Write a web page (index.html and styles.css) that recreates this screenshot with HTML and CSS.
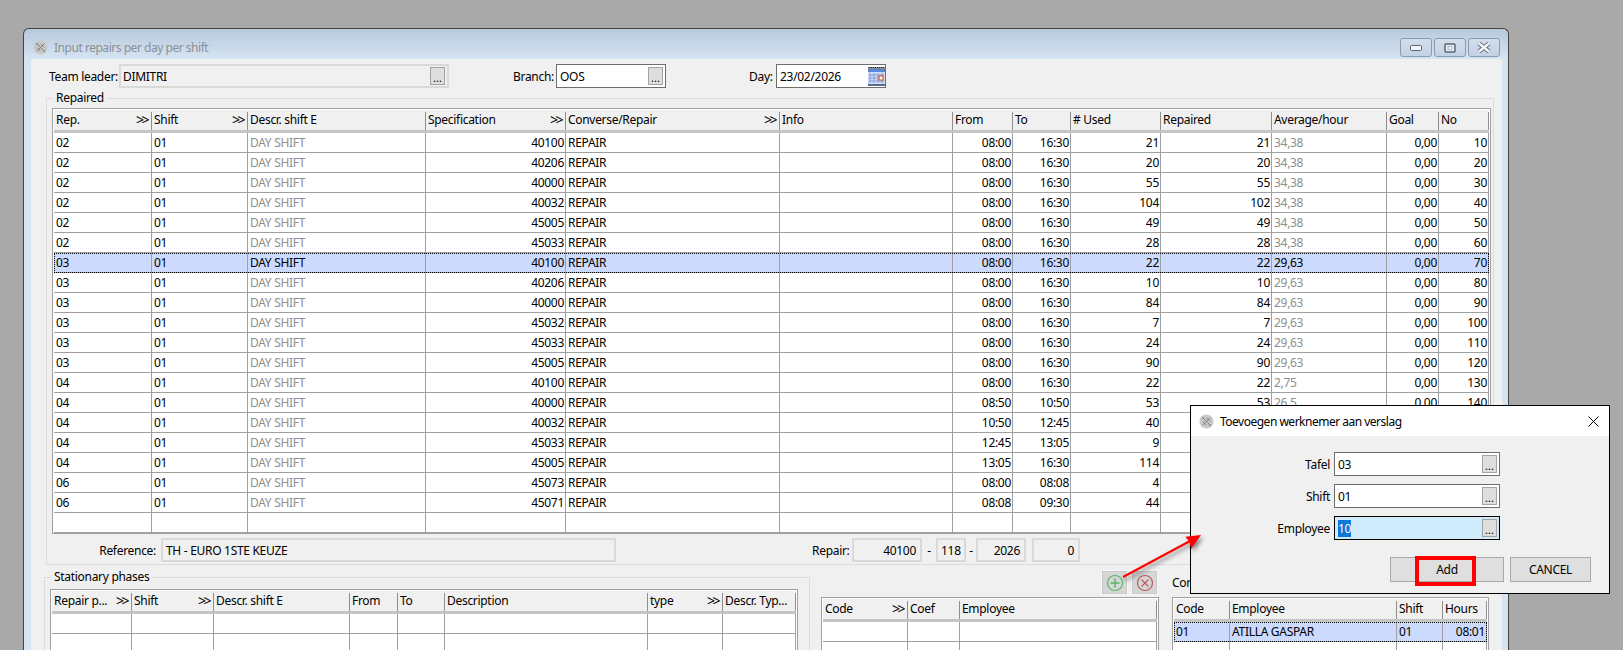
FILE: index.html
```html
<!DOCTYPE html>
<html lang="en">
<head>
    <meta charset="UTF-8">
    <title>Input repairs per day per shift</title>
    <link rel="stylesheet" href="styles.css">
</head>
<body>
    <div class="window">
        <div class="titlebar">
            <svg class="app-icon" viewBox="0 0 16 16"><circle cx="8" cy="8" r="7.5" fill="#c9c9c9"/><path d="M4 4l8 8M4 8l4 4M8 4l4 4M12 4l-8 8M5 3l-2 2M13 11l-2 2" stroke="#777" stroke-width="1" fill="none"/></svg>
            <span class="title-text">Input repairs per day per shift</span>
            <div class="win-buttons">
                <div class="win-btn"><svg width="12" height="6" viewBox="0 0 12 6"><rect x="0.5" y="0.5" width="11" height="5" rx="1" fill="#f4f6f9" stroke="#5a6472"/></svg></div>
                <div class="win-btn"><svg width="12" height="10" viewBox="0 0 12 10"><rect x="1" y="1" width="10" height="8" rx="1" fill="#e6ecf3" stroke="#5a6472" stroke-width="1.5"/><rect x="4" y="3.5" width="4" height="3" fill="#f4f6f9" stroke="#7d8794" stroke-width="0.5"/></svg></div>
                <div class="win-btn"><svg width="14" height="11" viewBox="0 0 14 11"><path d="M2 1.5l10 8M12 1.5l-10 8" stroke="#66707e" stroke-width="4.5" fill="none"/><path d="M2 1.5l10 8M12 1.5l-10 8" stroke="#f4f6f9" stroke-width="2.5" fill="none"/></svg></div>
            </div>
        </div>

        <div class="client">
            <div class="toolbar">
                <label class="lbl lbl-team">Team leader:</label>
                <div class="field field-team field-off"><span>DIMITRI</span><button class="dots">...</button></div>
                <label class="lbl lbl-branch">Branch:</label>
                <div class="field field-branch"><span>OOS</span><button class="dots">...</button></div>
                <label class="lbl lbl-day">Day:</label>
                <div class="field field-day">
                    <span>23/02/2026</span>
                    <svg class="cal" width="17" height="19" viewBox="0 0 17 19">
                        <rect x="0" y="0" width="17" height="2" fill="#8a8a8a"/>
                        <path d="M1 .5h15" stroke="#222" stroke-dasharray="1 1"/>
                        <rect x="0" y="2" width="17" height="3" fill="#5b86d6"/>
                        <rect x="0" y="5" width="17" height="12" fill="#cfdcf4"/>
                        <path d="M2 6v10M6 6v10M10 6v10M14 6v10M1 8h15M1 11h15M1 14h15" stroke="#7f9fd8" fill="none"/>
                        <rect x="11" y="9" width="4" height="4" fill="#fff" stroke="#e0431c"/>
                        <rect x="0" y="17" width="17" height="2" fill="#5a6c8c"/>
                    </svg>
                </div>
            </div>

            <fieldset class="group group-repaired">
                <legend>Repaired</legend>
                <div class="grid-box">
                    <table class="grid">
                        <colgroup>
                            <col class="c98"><col class="c96"><col class="c178"><col class="c140"><col class="c214"><col class="c173"><col class="c60"><col class="c58"><col class="c90"><col class="c111"><col class="c115"><col class="c52"><col class="c50">
                        </colgroup>
                        <thead>
                            <tr>
                                <th><div class="th">Rep.<i>&gt;&gt;</i></div></th>
                                <th><div class="th">Shift<i>&gt;&gt;</i></div></th>
                                <th><div class="th">Descr. shift E</div></th>
                                <th><div class="th">Specification<i>&gt;&gt;</i></div></th>
                                <th><div class="th">Converse/Repair<i>&gt;&gt;</i></div></th>
                                <th><div class="th">Info</div></th>
                                <th><div class="th">From</div></th>
                                <th><div class="th">To</div></th>
                                <th><div class="th"># Used</div></th>
                                <th><div class="th">Repaired</div></th>
                                <th><div class="th">Average/hour</div></th>
                                <th><div class="th">Goal</div></th>
                                <th><div class="th">No</div></th>
                            </tr>
                        </thead>
                        <tbody>
                            <tr><td>02</td><td>01</td><td class="dim">DAY SHIFT</td><td class="num">40100</td><td>REPAIR</td><td></td><td class="num">08:00</td><td class="num">16:30</td><td class="num">21</td><td class="num">21</td><td class="dim">34,38</td><td class="num">0,00</td><td class="num">10</td></tr>
                            <tr><td>02</td><td>01</td><td class="dim">DAY SHIFT</td><td class="num">40206</td><td>REPAIR</td><td></td><td class="num">08:00</td><td class="num">16:30</td><td class="num">20</td><td class="num">20</td><td class="dim">34,38</td><td class="num">0,00</td><td class="num">20</td></tr>
                            <tr><td>02</td><td>01</td><td class="dim">DAY SHIFT</td><td class="num">40000</td><td>REPAIR</td><td></td><td class="num">08:00</td><td class="num">16:30</td><td class="num">55</td><td class="num">55</td><td class="dim">34,38</td><td class="num">0,00</td><td class="num">30</td></tr>
                            <tr><td>02</td><td>01</td><td class="dim">DAY SHIFT</td><td class="num">40032</td><td>REPAIR</td><td></td><td class="num">08:00</td><td class="num">16:30</td><td class="num">104</td><td class="num">102</td><td class="dim">34,38</td><td class="num">0,00</td><td class="num">40</td></tr>
                            <tr><td>02</td><td>01</td><td class="dim">DAY SHIFT</td><td class="num">45005</td><td>REPAIR</td><td></td><td class="num">08:00</td><td class="num">16:30</td><td class="num">49</td><td class="num">49</td><td class="dim">34,38</td><td class="num">0,00</td><td class="num">50</td></tr>
                            <tr><td>02</td><td>01</td><td class="dim">DAY SHIFT</td><td class="num">45033</td><td>REPAIR</td><td></td><td class="num">08:00</td><td class="num">16:30</td><td class="num">28</td><td class="num">28</td><td class="dim">34,38</td><td class="num">0,00</td><td class="num">60</td></tr>
                            <tr class="selected"><td>03</td><td>01</td><td class="dim">DAY SHIFT</td><td class="num">40100</td><td>REPAIR</td><td></td><td class="num">08:00</td><td class="num">16:30</td><td class="num">22</td><td class="num">22</td><td class="dim">29,63</td><td class="num">0,00</td><td class="num">70</td></tr>
                            <tr><td>03</td><td>01</td><td class="dim">DAY SHIFT</td><td class="num">40206</td><td>REPAIR</td><td></td><td class="num">08:00</td><td class="num">16:30</td><td class="num">10</td><td class="num">10</td><td class="dim">29,63</td><td class="num">0,00</td><td class="num">80</td></tr>
                            <tr><td>03</td><td>01</td><td class="dim">DAY SHIFT</td><td class="num">40000</td><td>REPAIR</td><td></td><td class="num">08:00</td><td class="num">16:30</td><td class="num">84</td><td class="num">84</td><td class="dim">29,63</td><td class="num">0,00</td><td class="num">90</td></tr>
                            <tr><td>03</td><td>01</td><td class="dim">DAY SHIFT</td><td class="num">45032</td><td>REPAIR</td><td></td><td class="num">08:00</td><td class="num">16:30</td><td class="num">7</td><td class="num">7</td><td class="dim">29,63</td><td class="num">0,00</td><td class="num">100</td></tr>
                            <tr><td>03</td><td>01</td><td class="dim">DAY SHIFT</td><td class="num">45033</td><td>REPAIR</td><td></td><td class="num">08:00</td><td class="num">16:30</td><td class="num">24</td><td class="num">24</td><td class="dim">29,63</td><td class="num">0,00</td><td class="num">110</td></tr>
                            <tr><td>03</td><td>01</td><td class="dim">DAY SHIFT</td><td class="num">45005</td><td>REPAIR</td><td></td><td class="num">08:00</td><td class="num">16:30</td><td class="num">90</td><td class="num">90</td><td class="dim">29,63</td><td class="num">0,00</td><td class="num">120</td></tr>
                            <tr><td>04</td><td>01</td><td class="dim">DAY SHIFT</td><td class="num">40100</td><td>REPAIR</td><td></td><td class="num">08:00</td><td class="num">16:30</td><td class="num">22</td><td class="num">22</td><td class="dim">2,75</td><td class="num">0,00</td><td class="num">130</td></tr>
                            <tr><td>04</td><td>01</td><td class="dim">DAY SHIFT</td><td class="num">40000</td><td>REPAIR</td><td></td><td class="num">08:50</td><td class="num">10:50</td><td class="num">53</td><td class="num">53</td><td class="dim">26,5</td><td class="num">0,00</td><td class="num">140</td></tr>
                            <tr><td>04</td><td>01</td><td class="dim">DAY SHIFT</td><td class="num">40032</td><td>REPAIR</td><td></td><td class="num">10:50</td><td class="num">12:45</td><td class="num">40</td><td></td><td></td><td></td><td></td></tr>
                            <tr><td>04</td><td>01</td><td class="dim">DAY SHIFT</td><td class="num">45033</td><td>REPAIR</td><td></td><td class="num">12:45</td><td class="num">13:05</td><td class="num">9</td><td></td><td></td><td></td><td></td></tr>
                            <tr><td>04</td><td>01</td><td class="dim">DAY SHIFT</td><td class="num">45005</td><td>REPAIR</td><td></td><td class="num">13:05</td><td class="num">16:30</td><td class="num">114</td><td></td><td></td><td></td><td></td></tr>
                            <tr><td>06</td><td>01</td><td class="dim">DAY SHIFT</td><td class="num">45073</td><td>REPAIR</td><td></td><td class="num">08:00</td><td class="num">08:08</td><td class="num">4</td><td></td><td></td><td></td><td></td></tr>
                            <tr><td>06</td><td>01</td><td class="dim">DAY SHIFT</td><td class="num">45071</td><td>REPAIR</td><td></td><td class="num">08:08</td><td class="num">09:30</td><td class="num">44</td><td></td><td></td><td></td><td></td></tr>
                            <tr><td></td><td></td><td></td><td></td><td></td><td></td><td></td><td></td><td></td><td></td><td></td><td></td><td></td></tr>
                        </tbody>
                    </table>
                </div>
                <div class="info-row">
                    <label class="lbl lbl-ref">Reference:</label>
                    <div class="field field-off field-ref"><span>TH - EURO 1STE KEUZE</span></div>
                    <label class="lbl lbl-repair">Repair:</label>
                    <div class="field field-off field-r1 right"><span>40100</span></div>
                    <span class="dash dash-1">-</span>
                    <div class="field field-off field-r2 right"><span>118</span></div>
                    <span class="dash dash-2">-</span>
                    <div class="field field-off field-r3 right"><span>2026</span></div>
                    <div class="field field-off field-r4 right"><span>0</span></div>
                </div>
            </fieldset>

            <div class="lower">
                <fieldset class="group group-phases">
                    <legend>Stationary phases</legend>
                    <div class="grid-box">
                        <table class="grid">
                            <colgroup>
                                <col class="c80"><col class="c82"><col class="c136"><col class="c48"><col class="c47"><col class="c203"><col class="c75"><col class="c73">
                            </colgroup>
                            <thead>
                                <tr>
                                    <th><div class="th">Repair p...<i>&gt;&gt;</i></div></th>
                                    <th><div class="th">Shift<i>&gt;&gt;</i></div></th>
                                    <th><div class="th">Descr. shift E</div></th>
                                    <th><div class="th">From</div></th>
                                    <th><div class="th">To</div></th>
                                    <th><div class="th">Description</div></th>
                                    <th><div class="th">type<i>&gt;&gt;</i></div></th>
                                    <th><div class="th">Descr. Typ...</div></th>
                                </tr>
                            </thead>
                            <tbody>
                                <tr><td></td><td></td><td></td><td></td><td></td><td></td><td></td><td></td></tr>
                                <tr><td></td><td></td><td></td><td></td><td></td><td></td><td></td><td></td></tr>
                            </tbody>
                        </table>
                    </div>
                </fieldset>

                <div class="col-workers">
                    <div class="icon-row">
                        <button class="icon-btn"><svg width="18" height="18" viewBox="0 0 18 18"><circle cx="9" cy="9" r="7.5" fill="none" stroke="#55b865" stroke-width="1.2"/><path d="M9 4.5v9M4.5 9h9" stroke="#55b865" stroke-width="1.5"/></svg></button>
                        <button class="icon-btn"><svg width="18" height="18" viewBox="0 0 18 18"><circle cx="9" cy="9" r="7.5" fill="none" stroke="#b9575c" stroke-width="1.2"/><path d="M5.5 5.5l7 7M12.5 5.5l-7 7" stroke="#b9575c" stroke-width="1.1"/></svg></button>
                    </div>
                    <div class="grid-box">
                        <table class="grid">
                            <colgroup><col class="c85"><col class="c52"><col class="c197"></colgroup>
                            <thead>
                                <tr>
                                    <th><div class="th">Code<i>&gt;&gt;</i></div></th>
                                    <th><div class="th">Coef</div></th>
                                    <th><div class="th">Employee</div></th>
                                </tr>
                            </thead>
                            <tbody>
                                <tr><td></td><td></td><td></td></tr>
                                <tr><td></td><td></td><td></td></tr>
                            </tbody>
                        </table>
                    </div>
                </div>

                <div class="col-hours">
                    <div class="col-label">Cor</div>
                    <div class="grid-box">
                        <table class="grid">
                            <colgroup><col class="c56"><col class="c167"><col class="c46"><col class="c44"></colgroup>
                            <thead>
                                <tr>
                                    <th><div class="th">Code</div></th>
                                    <th><div class="th">Employee</div></th>
                                    <th><div class="th">Shift</div></th>
                                    <th><div class="th">Hours</div></th>
                                </tr>
                            </thead>
                            <tbody>
                                <tr class="selected"><td>01</td><td>ATILLA GASPAR</td><td>01</td><td class="num">08:01</td></tr>
                                <tr><td></td><td></td><td></td><td></td></tr>
                            </tbody>
                        </table>
                    </div>
                </div>
            </div>
        </div>
    </div>

    <div class="dialog">
        <div class="dialog-title">
            <svg class="app-icon" viewBox="0 0 16 16"><circle cx="8" cy="8" r="7.5" fill="#c9c9c9"/><path d="M4 4l8 8M4 8l4 4M8 4l4 4M12 4l-8 8M5 3l-2 2M13 11l-2 2" stroke="#777" stroke-width="1" fill="none"/></svg>
            <span>Toevoegen werknemer aan verslag</span>
            <svg class="dialog-close" width="11" height="11" viewBox="0 0 11 11"><path d="M.5 .5l10 10M10.5 .5l-10 10" stroke="#000" fill="none"/></svg>
        </div>
        <div class="dialog-body">
            <div class="form-row">
                <label>Tafel</label>
                <div class="field field-dlg"><span>03</span><button class="dots">...</button></div>
            </div>
            <div class="form-row">
                <label>Shift</label>
                <div class="field field-dlg"><span>01</span><button class="dots">...</button></div>
            </div>
            <div class="form-row">
                <label>Employee</label>
                <div class="field field-dlg field-focus"><span><mark>10</mark></span><button class="dots">...</button></div>
            </div>
            <div class="dialog-actions">
                <button class="btn btn-add">Add</button>
                <button class="btn btn-cancel">CANCEL</button>
            </div>
        </div>
    </div>

    <div class="red-box"></div>
    <svg class="arrow" width="100" height="60" viewBox="0 0 100 60">
        <path d="M4 50L72 13.5" stroke="#f00" stroke-width="2" fill="none"/>
        <path d="M82 8L72.2 21.7L70.4 14.7L66.4 9.7Z" fill="#f00"/>
    </svg>
</body>
</html>
```

FILE: styles.css
```css
html, body {
    height: 650px;
    overflow: hidden;
}
body {
    margin: 0;
    position: relative;
    background-color: #a9a9a9;
    font-family: "Noto Sans", Arial, sans-serif;
    font-size: 12px;
    letter-spacing: -0.3px;
    color: #000;
}

/* main window */
.window {
    position: absolute;
    left: 23px;
    top: 28px;
    width: 1486px;
    height: 622px;
    box-sizing: border-box;
    padding: 0 6px 0 7px;
    border: 1px solid #444;
    border-bottom: 0;
    border-radius: 6px 6px 0 0;
    background: linear-gradient(#b7c9dc, #d7e5f3 31px);
    overflow: hidden;
}
.titlebar {
    display: flex;
    align-items: center;
    box-sizing: border-box;
    height: 30px;
    padding-top: 7px;
}
.app-icon {
    width: 15px;
    height: 15px;
    flex: none;
}
.titlebar .app-icon {
    margin: 0 6px 0 2px;
}
.title-text {
    color: #8b9097;
    letter-spacing: -0.47px;
}
.win-buttons {
    display: flex;
    gap: 2px;
    margin: 0 2px 0 auto;
}
.win-btn {
    display: flex;
    align-items: center;
    justify-content: center;
    width: 30px;
    height: 17px;
    border: 1px solid #8a9ab3;
    border-radius: 3px;
    background: linear-gradient(#d2deeb, #c2d1e3);
}
.client {
    height: 592px;
    overflow: hidden;
    background-color: #f0f0f0;
}

/* top row */
.toolbar {
    display: flex;
    align-items: center;
    height: 24px;
    padding: 5px 0 0 18px;
}
.lbl {
    white-space: nowrap;
}
.lbl-team { width: 70px; }
.lbl-branch { margin-left: 64px; width: 43px; }
.lbl-day { margin-left: 83px; width: 27px; }

.field {
    display: flex;
    align-items: center;
    box-sizing: border-box;
    height: 24px;
    padding: 0 2px 0 3px;
    border: 1px solid #6e6e6e;
    background-color: #fff;
    white-space: nowrap;
}
.field span {
    flex: 1;
}
.field-off {
    border: 2px solid #d9d9d9;
    background-color: #f0f0f0;
}
.field.right span {
    text-align: right;
}
.field-team { width: 330px; padding-left: 2px; }
.field-branch { width: 110px; }
.field-day { width: 110px; padding-right: 0; }
.dots {
    flex: none;
    box-sizing: border-box;
    width: 15px;
    height: 18px;
    padding: 3px 0 0;
    border: 1px solid #a3a3a3;
    background-color: #dedede;
    font-family: inherit;
    font-size: 11px;
    line-height: 12px;
    color: #000;
}
.cal {
    flex: none;
}

/* groups */
.group {
    min-width: 0;
    box-sizing: border-box;
    margin: 0;
    border: 1px solid #dcdcdc;
}
.group legend {
    margin-left: 1px;
    padding: 0 3px;
    line-height: 16px;
}
.group-repaired {
    width: 1448px;
    margin: 2px 0 0 15px;
    padding: 2px 2px 2px 5px;
}
.group-phases {
    flex: none;
    width: 766px;
    height: 100px;
    padding: 4px 0 0 5px;
}

/* tables */
.grid-box {
    width: fit-content;
    padding: 1px 1px 0;
    border: 1px solid #a0a0a0;
    background-color: #fff;
}
.grid {
    table-layout: fixed;
    width: 1px;
    border-collapse: separate;
    border-spacing: 0;
}
.grid th {
    height: 20px;
    padding: 0;
    border-bottom: 3px solid #c4c4c4;
    background-color: #f0f0f0;
    font-weight: normal;
    text-align: left;
}
.th {
    display: flex;
    align-items: center;
    justify-content: space-between;
    box-sizing: border-box;
    height: 18px;
    margin-top: 1px;
    padding: 0 1px 3px 2px;
    border-right: 1px solid #8e8e8e;
    white-space: nowrap;
}
.th i {
    font-style: normal;
    font-size: 14px;
    letter-spacing: -2.5px;
    padding-right: 3px;
}
.grid td {
    box-sizing: border-box;
    height: 20px;
    padding: 0 1px 0 2px;
    border-right: 1px solid #a0a0a0;
    border-bottom: 1px solid #a0a0a0;
    white-space: nowrap;
    overflow: hidden;
    line-height: 18px;
    background-color: #fff;
}
.grid td.num { text-align: right; }
.grid td.dim { color: #8e8e8e; }
.grid tr.selected {
    outline: 1px dotted #000;
    outline-offset: -1px;
}
.grid tr.selected td {
    background-color: #cbdafd;
    color: #000;
}

.c44 { width: 44px; } .c46 { width: 46px; } .c47 { width: 47px; } .c48 { width: 48px; }
.c50 { width: 50px; } .c52 { width: 52px; } .c56 { width: 56px; } .c58 { width: 58px; }
.c60 { width: 60px; } .c73 { width: 73px; } .c75 { width: 75px; } .c80 { width: 80px; }
.c82 { width: 82px; } .c85 { width: 85px; } .c90 { width: 90px; } .c96 { width: 96px; }
.c98 { width: 98px; } .c111 { width: 111px; } .c115 { width: 115px; } .c136 { width: 136px; }
.c140 { width: 140px; } .c167 { width: 167px; } .c173 { width: 173px; } .c178 { width: 178px; }
.c197 { width: 197px; } .c203 { width: 203px; } .c214 { width: 214px; }

/* row under the big table */
.info-row {
    display: flex;
    align-items: center;
    margin-top: 4px;
    height: 24px;
}
.lbl-ref { width: 104px; text-align: right; margin-right: 5px; }
.lbl-repair { margin-left: 196px; width: 40px; }
.field-ref { width: 455px; }
.field-r1 { width: 70px; padding-right: 4px; }
.field-r2 { width: 30px; padding-right: 4px; }
.field-r3 { width: 50px; padding-right: 4px; }
.field-r4 { width: 48px; margin-left: 6px; padding-right: 4px; }
.dash { text-align: center; }
.dash-1 { width: 14px; }
.dash-2 { width: 10px; }

/* lower part */
.lower {
    display: flex;
    align-items: flex-start;
    margin: 4px 0 0 13px;
}
.col-workers {
    margin-left: 11px;
}
.icon-row {
    display: flex;
    justify-content: flex-end;
    gap: 3px;
    padding: 1px 1px 0 0;
    margin-bottom: 2px;
}
.icon-btn {
    display: flex;
    align-items: center;
    justify-content: center;
    box-sizing: border-box;
    width: 27px;
    height: 25px;
    padding: 0;
    border: 1px solid #f7f7f7;
    outline: 1px solid #c9c9c9;
    outline-offset: -2px;
    background-color: #d6d6d6;
}
.col-hours {
    margin-left: 13px;
}
.col-label {
    padding-top: 6px;
    margin-bottom: 6px;
    line-height: 16px;
}

/* dialog */
.dialog {
    position: absolute;
    left: 1190px;
    top: 405px;
    width: 420px;
    height: 189px;
    box-sizing: border-box;
    border: 1px solid #000;
    background-color: #f0f0f0;
}
.dialog-title {
    display: flex;
    align-items: center;
    gap: 6px;
    height: 30px;
    padding-left: 8px;
    background-color: #fff;
    letter-spacing: -0.5px;
}
.dialog-title span {
    flex: 1;
}
.dialog-close {
    margin-right: 10px;
}
.dialog-body {
    padding-top: 16px;
}
.form-row {
    display: flex;
    align-items: center;
    gap: 4px;
    height: 24px;
    margin-bottom: 8px;
    padding-right: 109px;
    justify-content: flex-end;
}
.field-dlg {
    width: 166px;
    padding-right: 2px;
}
.field-focus {
    border-color: #000;
    background-color: #d0ebfb;
}
.field-focus mark {
    background-color: #0a78d7;
    color: #fff;
}
.dialog-actions {
    display: flex;
    justify-content: flex-end;
    gap: 6px;
    margin-top: 17px;
    padding-right: 18px;
}
.btn {
    box-sizing: border-box;
    height: 25px;
    padding: 0;
    border: 1px solid #a9a9a9;
    background-color: #dfdfdf;
    font-family: inherit;
    font-size: 12px;
    letter-spacing: inherit;
    color: #000;
}
.btn-add { width: 114px; }
.btn-cancel { width: 81px; }

/* annotations drawn on the screenshot */
.red-box {
    position: absolute;
    left: 1415px;
    top: 556px;
    width: 61px;
    height: 30px;
    box-sizing: border-box;
    border: 4px solid #f00;
}
.arrow {
    position: absolute;
    left: 1119px;
    top: 527px;
    filter: drop-shadow(2px 3px 2px rgba(0, 0, 0, 0.45));
}
```
